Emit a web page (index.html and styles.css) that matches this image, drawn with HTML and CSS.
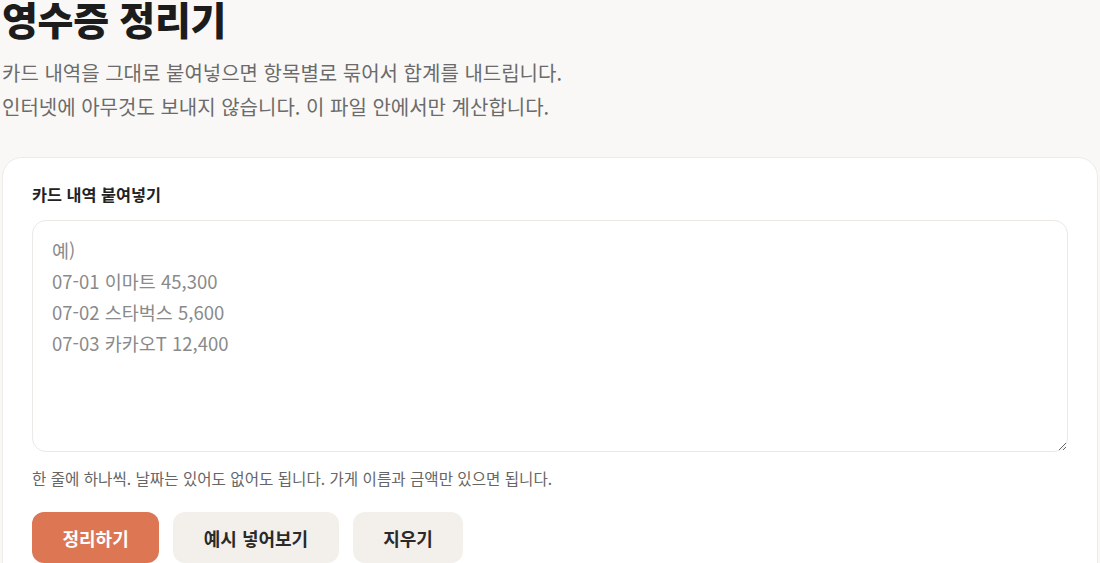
FILE: index.html
```html
<!DOCTYPE html>
<html lang="ko">
<head>
<meta charset="utf-8">
<title>영수증 정리기</title>
<link rel="stylesheet" href="styles.css">
</head>
<body>
<main class="page">
  <header class="head">
    <h1 class="title">영수증 정리기</h1>
    <p class="lead">카드 내역을 그대로 붙여넣으면 항목별로 묶어서 합계를 내드립니다.<br>인터넷에 아무것도 보내지 않습니다. 이 파일 안에서만 계산합니다.</p>
  </header>
  <section class="card">
    <label class="label" for="input">카드 내역 붙여넣기</label>
    <textarea id="input" class="input" placeholder="예)
07-01 이마트 45,300
07-02 스타벅스 5,600
07-03 카카오T 12,400"></textarea>
    <p class="hint">한 줄에 하나씩. 날짜는 있어도 없어도 됩니다. 가게 이름과 금액만 있으면 됩니다.</p>
    <div class="actions">
      <button class="btn btn-primary" type="button">정리하기</button>
      <button class="btn" type="button">예시 넣어보기</button>
      <button class="btn" type="button">지우기</button>
    </div>
  </section>
</main>
</body>
</html>
```

FILE: styles.css
```css
html, body {
  margin: 0;
  padding: 0;
  background: #f9f8f6;
}
body {
  font-family: "Noto Sans CJK KR", "Noto Sans", sans-serif;
  color: #1f1f1f;
}
.page {
  padding: 0 2px;
}
.title {
  margin: 0;
  font-size: 39px;
  line-height: 37px;
  font-weight: 800;
  color: #1c1c1c;
  letter-spacing: -0.3px;
}
.lead {
  margin: 19px 0 0;
  font-size: 20px;
  line-height: 34px;
  color: #6b6b6b;
}
.card {
  margin-top: 33px;
  background: #fff;
  border: 1px solid #eeebe7;
  border-radius: 20px;
  padding: 25px 29px 40px;
}
.label {
  display: block;
  font-size: 16.3px;
  line-height: 22px;
  font-weight: 700;
  color: #222;
}
.input {
  display: block;
  box-sizing: border-box;
  width: 100%;
  height: 232px;
  margin-top: 15px;
  padding: 14px 19px;
  border: 1px solid #ebe8e5;
  border-radius: 14px;
  font-family: "Noto Sans CJK KR", "Noto Sans", sans-serif;
  font-size: 18.5px;
  line-height: 31px;
  color: #333;
  background: #fff;
  outline: none;
}
.input::placeholder {
  color: #8a8a8a;
}
.hint {
  margin: 15px 0 0;
  font-size: 15.6px;
  line-height: 22px;
  color: #666;
}
.actions {
  display: flex;
  gap: 14px;
  margin-top: 23px;
}
.btn {
  height: 51px;
  padding: 0 30.5px;
  border: none;
  border-radius: 12px;
  background: #f3f0ec;
  color: #2a2a2a;
  font-family: "Noto Sans CJK KR", "Noto Sans", sans-serif;
  font-size: 18px;
  font-weight: 700;
}
.btn-primary {
  background: #dd7653;
  color: #fff;
}
```
